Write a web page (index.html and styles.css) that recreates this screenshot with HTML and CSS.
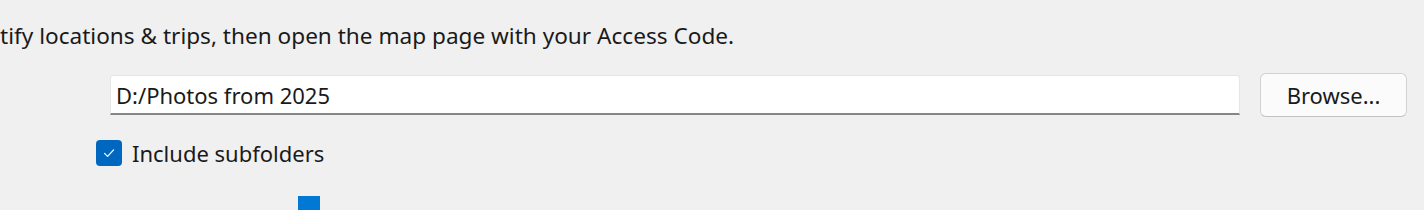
FILE: index.html
```html
<!DOCTYPE html>
<html>
<head>
<meta charset="utf-8">
<link rel="stylesheet" href="styles.css">
</head>
<body>
<div class="page">
  <p class="intro">tify locations &amp; trips, then open the map page with your Access Code.</p>
  <div class="folder-row">
    <div class="path-input">D:/Photos from 2025</div>
    <button class="browse">Browse...</button>
  </div>
  <label class="check-row">
    <span class="checkbox">
      <svg width="14" height="14" viewBox="0 0 14 14"><path d="M2.5 7.4 L5.6 10.4 L11.6 3.8" fill="none" stroke="#ffffff" stroke-width="1.2" stroke-linecap="round" stroke-linejoin="round"/></svg>
    </span>
    <span class="check-label">Include subfolders</span>
  </label>
  <div class="slider-row">
    <span class="thumb"></span>
  </div>
</div>
</body>
</html>
```
FILE: styles.css
```css
html, body {
  margin: 0;
  padding: 0;
  background: #f0f0f0;
  overflow: hidden;
}
.page {
  width: 1424px;
  height: 210px;
  display: flex;
  flex-direction: column;
  font-family: "Noto Sans", "Open Sans", sans-serif;
  font-size: 22px;
  color: #1a1a1a;
}
.intro {
  margin: 0;
  padding-top: 22px;
  font-size: 22.6px;
  line-height: 28px;
  height: 28px;
  white-space: nowrap;
}
.folder-row {
  display: flex;
  align-items: center;
  margin-top: 23px;
  padding-left: 110px;
  gap: 20px;
  height: 44px;
}
.path-input {
  box-sizing: border-box;
  width: 1130px;
  height: 40px;
  background: #ffffff;
  border: 1px solid #e6e6e6;
  border-bottom: 2px solid #868686;
  border-radius: 3px 3px 0 0;
  padding: 2px 5px 0;
  line-height: 34px;
  white-space: nowrap;
}
.browse {
  box-sizing: border-box;
  width: 147px;
  height: 44px;
  background: #fbfbfb;
  border: 1px solid #d2d2d2;
  border-bottom-color: #c2c2c2;
  border-radius: 6px;
  font-family: inherit;
  font-size: 22px;
  color: #1a1a1a;
  padding: 0;
}
.check-row {
  display: flex;
  align-items: center;
  margin-top: 23px;
  padding-left: 96px;
  gap: 10px;
  height: 26px;
}
.checkbox {
  width: 26px;
  height: 26px;
  border-radius: 4px;
  background: #0067c0;
  display: flex;
  align-items: center;
  justify-content: center;
}
.check-label {
  line-height: 26px;
}
.slider-row {
  margin-top: 30px;
  padding-left: 298px;
  height: 14px;
}
.thumb {
  display: block;
  width: 22px;
  height: 14px;
  background: #0078d4;
}
```
